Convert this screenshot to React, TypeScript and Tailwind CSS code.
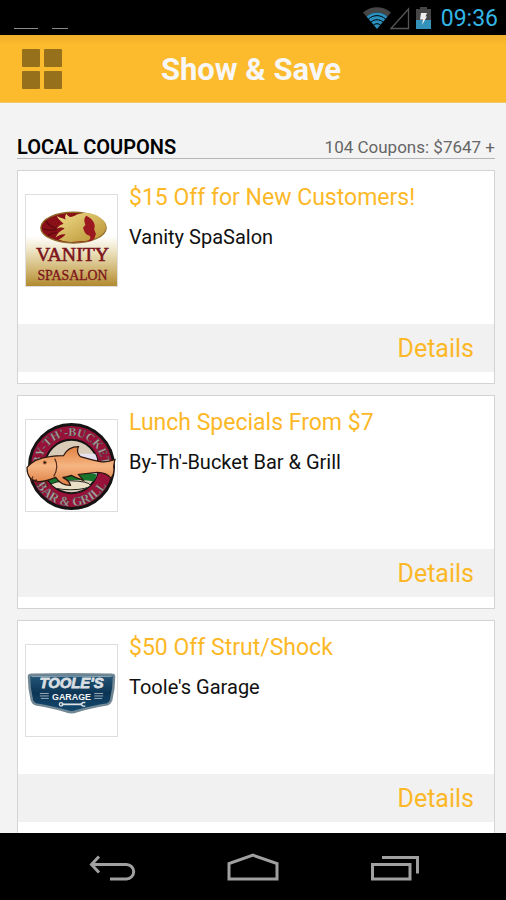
import type { ReactNode } from "react";

type Coupon = {
  title: string;
  business: string;
  logo: ReactNode;
};

const VanityLogo = () => (
  <svg viewBox="0 0 92 92" className="block w-full" role="img" aria-label="Vanity SpaSalon logo">
    <defs>
      <linearGradient id="vanity-bg" x1="0" y1="0" x2="0" y2="1">
        <stop offset="0.45" stopColor="#ffffff" />
        <stop offset="0.6" stopColor="#efe6c8" />
        <stop offset="0.85" stopColor="#cdb068" />
        <stop offset="1" stopColor="#b08a30" />
      </linearGradient>
      <linearGradient id="vanity-gold" x1="0" y1="0" x2="1" y2="1">
        <stop offset="0" stopColor="#efdc8a" />
        <stop offset="1" stopColor="#b8902f" />
      </linearGradient>
    </defs>
    <rect width="92" height="92" fill="url(#vanity-bg)" />
    <ellipse cx="48" cy="33" rx="33" ry="15.5" fill="#8a1018" stroke="#8c6a28" strokeWidth="1.4" />
    <path
      d="M31 21c4 3 6 2 9 4c-1-3 0-5 1-6c2 4 5 4 10 1c8-3 18-2 24 3c7 5 8 12 2 17c-6 5-15 7-25 7c-8 1-14 0-19-2c3-1 5-3 7-5c-4-1-7 1-10 3c2-5 5-7 9-9c-3-2-5-1-8 0c3-4 5-4 7-5c-3-3-5-4-7-8z"
      fill="url(#vanity-gold)"
    />
    <path
      d="M61 21c-3 3-2 6-1 9c-1 2-3 3-2 4c1 3 2 6 6 7c2 2 1 4-2 6c5 0 8-3 8-6c2-2-1-4-1-7c2-5-2-10-8-13z"
      fill="#9c1820"
    />
    <path d="M20 26c3 5 7 7 11 8M17 34c5 2 9 2 14 1M22 41c3-2 6-3 9-3" stroke="#5c0a10" strokeWidth="1.4" fill="none" />
    <g fill="#7c141c" stroke="#7c141c" textAnchor="middle" fontFamily="'Liberation Serif', serif">
      <text x="47" y="67" fontSize="20" strokeWidth="0.6">VANITY</text>
      <text x="47" y="86" fontSize="14" strokeWidth="0.3">SPASALON</text>
    </g>
  </svg>
);

const BucketLogo = () => (
  <svg viewBox="0 0 92 92" className="block w-full" role="img" aria-label="By-Th'-Bucket Bar & Grill logo">
    <defs>
      <path id="bucket-top" d="M15 47a31 31 0 0 1 62 0" />
      <path id="bucket-bottom" d="M6 47a40 40 0 0 0 80 0" />
      <clipPath id="bucket-inner">
        <circle cx="46" cy="47" r="27" />
      </clipPath>
      <linearGradient id="bucket-fish" x1="0" y1="0" x2="0" y2="1">
        <stop offset="0" stopColor="#e0813f" />
        <stop offset="0.5" stopColor="#f6b583" />
        <stop offset="1" stopColor="#dd7d41" />
      </linearGradient>
    </defs>
    <rect width="92" height="92" fill="#fff" />
    <circle cx="46" cy="47" r="42.5" fill="#981139" stroke="#151313" strokeWidth="3" />
    <circle cx="46" cy="47" r="27" fill="#d8ccb8" stroke="#151313" strokeWidth="2" />
    <g clipPath="url(#bucket-inner)">
      <path d="M38 34h34v25H38z" fill="#e5e1f0" />
      <path d="M17 58c18-8 39-8 58-2v8c-18-6-34-3-58 2z" fill="#16752b" />
      <path d="M24 66c9 11 30 12 42 0v10H24z" fill="#bdb6a2" />
      <ellipse cx="45" cy="66" rx="20" ry="4.500" fill="#e8dfc6" stroke="#24221e" />
    </g>
    <g fill="#aaa29e" stroke="#373034" strokeWidth="0.3" textAnchor="middle" fontFamily="'Liberation Serif', serif" fontWeight="bold" fontSize="12">
      <text>
        <textPath href="#bucket-top" startOffset="50%">BY-TH'-BUCKET</textPath>
      </text>
      <text fontSize="13">
        <textPath href="#bucket-bottom" startOffset="50%">BAR &amp; GRILL</textPath>
      </text>
    </g>
    <path
      d="M1 48c5-6 13-10 23-11c6-1 10-1 14-1c3-6 8-9 15-9c-2 4-1 7 2 10c7 2 14 4 20 5c5 1 10 0 15-2c-1 4-2 7-1 10c0 3-1 6-3 9c-3-4-8-6-14-6l-19 2l5 6l-8-3l-4-2c-3 1-6 2-9 2c4 2 7 4 8 8c-6 0-12-3-15-8c-7 3-13 5-19 4c-6-1-10-6-10-14z"
      fill="url(#bucket-fish)"
      stroke="#2c1710"
      strokeWidth="1.200"
    />
    <circle cx="19" cy="43" r="1.600" fill="#1d1512" stroke="#b56a3b" />
    <path d="M29 39c3 5 3 11-1 18M7 57l-2 5M10 60l3 7M19 61l3 6" stroke="#54281b" strokeWidth="1.200" fill="none" />
  </svg>
);

const TooleLogo = () => (
  <svg viewBox="0 0 92 92" className="block w-full" role="img" aria-label="Toole's Garage logo">
    <defs>
      <linearGradient id="toole-badge" x1="0" y1="0" x2="0" y2="1">
        <stop offset="0" stopColor="#25597b" />
        <stop offset="0.5" stopColor="#0d3555" />
        <stop offset="1" stopColor="#124a70" />
      </linearGradient>
    </defs>
    <rect width="92" height="92" fill="#fff" />
    <path
      d="M3 32q0-2 2-2q41-1 82 0q2 0 2 2q0 12-3 24q-1 3-4 4q-18 3-31 7q-5 2-10 0q-13-4-31-7q-3-1-4-4q-3-12-3-24z"
      fill="url(#toole-badge)"
      stroke="#728894"
      strokeWidth="2.500"
    />
    <path d="M5.500 32q40-1 81 0" stroke="#a9bac4" strokeWidth="0.800" fill="none" />
    <g textAnchor="middle" fontWeight="bold" fontFamily="'Liberation Sans', sans-serif">
      <text x="46" y="43" fontSize="15" fontStyle="italic" fill="#d9dee1" stroke="#d9dee1" strokeWidth="0.800">TOOLE'S</text>
      <text x="46" y="56" fontSize="9" fill="#f4f4f4">GARAGE</text>
    </g>
    <path d="M14 49h9M14 51.500h9M15 54h8M69 49h9M69 51.500h9M69 54h8" stroke="#a9bac4" strokeWidth="0.900" />
    <path d="M36 60h20" stroke="#dce1e4" strokeWidth="1.800" />
    <circle cx="35.500" cy="60" r="1.800" fill="none" stroke="#dce1e4" strokeWidth="1.300" />
    <path d="M60 58.200h-2.500l-2 1.800l2 1.800h2.500" fill="none" stroke="#dce1e4" strokeWidth="1.500" />
  </svg>
);

const coupons: Coupon[] = [
  { title: "$15 Off for New Customers!", business: "Vanity SpaSalon", logo: <VanityLogo /> },
  { title: "Lunch Specials From $7", business: "By-Th'-Bucket Bar & Grill", logo: <BucketLogo /> },
  { title: "$50 Off Strut/Shock", business: "Toole's Garage", logo: <TooleLogo /> },
];

const StatusBar = () => (
  <div className="flex h-[35px] shrink-0 items-center justify-between bg-black pr-2 pl-3.5">
    <div className="flex gap-3.5 self-end pb-1.5">
      <span className="h-px w-6 bg-[#8a8a8a]" />
      <span className="h-px w-4 bg-[#8a8a8a]" />
    </div>
    <div className="flex items-center">
      <svg width="47" height="24" viewBox="0 0 47 24" aria-hidden="true">
        <path d="M0 6.500C8-0.500 20-0.500 28 6.500L24.500 10.500C18 5 10 5 3.500 10.500z" fill="#464646" />
        <path d="M3.500 10.500C10 5 18 5 24.500 10.500L14 23z" fill="#2a8fbd" />
        <path d="M5.500 13C10.500 8.500 17.500 8.500 22.500 13M8 16C11.500 13 16.500 13 20 16M10.500 19C12.500 17.300 15.500 17.300 17.500 19" fill="none" stroke="#000" strokeWidth="1" />
        <path d="M28 22.500L45.500 3V22.500z" fill="none" stroke="#555" strokeWidth="1.300" />
      </svg>
      <svg className="ml-1.5" width="15" height="22" viewBox="0 0 15 22" aria-hidden="true">
        <path d="M4 0h7v2h4v11H0V2h4z" fill="#464646" />
        <path d="M0 13h15v9H0z" fill="#3292ba" />
        <path d="M5 6h6l-1.500 3.500H11L6 18l1-5.500H4z" fill="#eee" />
      </svg>
      <span className="ml-2.5 pt-0.5 text-[23px] leading-7 text-[#33b5e5]">09:36</span>
    </div>
  </div>
);

const Header = () => (
  <header className="grid h-[68px] shrink-0 grid-cols-[1fr_auto_1fr] items-center border-b border-[#f3c76c] bg-[#fcba2d] bg-linear-to-b from-[#f0b02b] to-[#fcba2d] to-15% pt-0.5 pr-[26px] pl-[22px]">
    <button type="button" aria-label="Menu" className="mb-0.5 grid w-10 grid-cols-2 gap-1">
      {[0, 1, 2, 3].map((i) => (
        <span key={i} className="h-[18px] rounded-[1px] bg-[#96701b]" />
      ))}
    </button>
    <h1 className="text-[31px] leading-10 font-bold text-[#f7f7f7]">Show &amp; Save</h1>
  </header>
);

const CouponCard = ({ title, business, logo }: Coupon) => (
  <li className="border border-[#d3d3d3] bg-white pb-[11px]">
    <div className="flex min-h-[153px] gap-[11px] pt-[11px] pl-[7px]">
      <div className="mt-3 w-[93px] shrink-0 self-start border border-[#dedede]">{logo}</div>
      <div>
        <h3 className="text-[23px] leading-8 text-[#fcb827]">{title}</h3>
        <p className="mt-[7px] text-xl leading-8 text-[#111]">{business}</p>
      </div>
    </div>
    <div className="flex h-12 items-center justify-end bg-[#f1f1f1] px-5 pt-0.5">
      <a href="#details" className="text-[25px] leading-8 text-[#fcb827]">Details</a>
    </div>
  </li>
);

const NavBar = () => (
  <nav className="flex h-[67px] shrink-0 items-center justify-center gap-[89px] bg-black text-[#a0a0a0]">
    <button type="button" aria-label="Back">
      <svg width="52" height="30" viewBox="0 0 52 30" fill="none" stroke="currentColor" strokeWidth="3">
        <path d="M5 12.500H40.500a7.200 7.200 0 0 1 0 14.400H24M13 4.500L5.500 12.500L13 20.500" />
      </svg>
    </button>
    <button type="button" aria-label="Home">
      <svg width="52" height="30" viewBox="0 0 52 30" fill="none" stroke="currentColor" strokeWidth="3">
        <path d="M2 27V11.500L26 3.200L50 11.500V27z" />
      </svg>
    </button>
    <button type="button" aria-label="Recent apps">
      <svg width="52" height="30" viewBox="0 0 52 30" fill="none" stroke="currentColor" strokeWidth="3">
        <path d="M4.500 12.500H42V27H4.500zM14 5.500H49.500V21.500" />
      </svg>
    </button>
  </nav>
);

export default function App() {
  return (
    <div className="flex h-screen flex-col overflow-hidden bg-[#f3f3f3] font-['Roboto',sans-serif]">
      <StatusBar />
      <Header />
      <main className="min-h-0 flex-1 overflow-hidden pt-[33px] pr-[11px] pl-[17px]">
        <div className="flex items-center justify-between border-b border-[#b4b6b9]">
          <h2 className="text-xl leading-[22px] font-semibold text-black">LOCAL COUPONS</h2>
          <p className="text-[17px] leading-[22px] text-[#666]">104 Coupons: $7647 +</p>
        </div>
        <ul className="mt-[11px] flex flex-col gap-[11px]">
          {coupons.map((coupon) => (
            <CouponCard key={coupon.business} {...coupon} />
          ))}
        </ul>
      </main>
      <NavBar />
    </div>
  );
}
